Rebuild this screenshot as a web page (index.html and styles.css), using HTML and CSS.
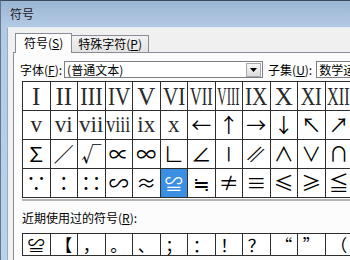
FILE: index.html
```html
<!DOCTYPE html>
<html lang="zh-CN">
<head>
    <meta charset="UTF-8">
    <title>符号</title>
    <link rel="stylesheet" href="styles.css">
</head>
<body>
    <div class="window">
        <div class="titlebar">符号</div>

        <div class="client">
            <div class="tabs">
                <div class="tab active">符号(<u>S</u>)</div>
                <div class="tab">特殊字符(<u>P</u>)</div>
            </div>

            <div class="panel">
                <div class="font-row">
                    <span class="label">字体(<u>F</u>):</span>
                    <div class="combo font-combo">
                        <span class="combo-text">(普通文本)</span>
                        <span class="drop">
                            <svg width="7" height="4" viewBox="0 0 7 4"><path d="M0 0h7L3.5 4z" fill="#000"/></svg>
                        </span>
                    </div>
                    <span class="label subset-label">子集(<u>U</u>):</span>
                    <div class="combo subset-combo">
                        <span class="combo-text">数学运算符</span>
                    </div>
                </div>

                <!-- symbol table -->
                <div class="grid-wrap">
                    <div class="grid symbols">
                        <div class="cell roman">I</div>
                        <div class="cell roman">II</div>
                        <div class="cell roman"><span class="sq x90">III</span></div>
                        <div class="cell roman"><span class="sq x85">IV</span></div>
                        <div class="cell roman">V</div>
                        <div class="cell roman"><span class="sq x85">VI</span></div>
                        <div class="cell roman"><span class="sq x65">VII</span></div>
                        <div class="cell roman"><span class="sq x50">VIII</span></div>
                        <div class="cell roman"><span class="sq x85">IX</span></div>
                        <div class="cell roman">X</div>
                        <div class="cell roman"><span class="sq x80">XI</span></div>
                        <div class="cell roman"><span class="sq x65">XII</span></div>

                        <div class="cell lower">v</div>
                        <div class="cell lower">vi</div>
                        <div class="cell lower">vii</div>
                        <div class="cell lower"><span class="sq x78">viii</span></div>
                        <div class="cell lower">ix</div>
                        <div class="cell lower">x</div>
                        <div class="cell">←</div>
                        <div class="cell">↑</div>
                        <div class="cell">→</div>
                        <div class="cell">↓</div>
                        <div class="cell">↖</div>
                        <div class="cell">↗</div>

                        <div class="cell">∑</div>
                        <div class="cell">∕</div>
                        <div class="cell">√</div>
                        <div class="cell">∝</div>
                        <div class="cell">∞</div>
                        <div class="cell">∟</div>
                        <div class="cell">∠</div>
                        <div class="cell">∣</div>
                        <div class="cell"><span class="sq slant">∥</span></div>
                        <div class="cell">∧</div>
                        <div class="cell">∨</div>
                        <div class="cell">∩</div>

                        <div class="cell">∵</div>
                        <div class="cell">∶</div>
                        <div class="cell">∷</div>
                        <div class="cell">∽</div>
                        <div class="cell">≈</div>
                        <div class="cell selected">≌</div>
                        <div class="cell">≒</div>
                        <div class="cell">≠</div>
                        <div class="cell">≡</div>
                        <div class="cell">≤</div>
                        <div class="cell">≥</div>
                        <div class="cell">≦</div>
                    </div>
                </div>

                <div class="recent-label">近期使用过的符号(<u>R</u>):</div>
                <div class="grid recent">
                    <div class="cell">≌</div>
                    <div class="cell">【</div>
                    <div class="cell">，</div>
                    <div class="cell">。</div>
                    <div class="cell">、</div>
                    <div class="cell">；</div>
                    <div class="cell">：</div>
                    <div class="cell">！</div>
                    <div class="cell">？</div>
                    <div class="cell">“</div>
                    <div class="cell">”</div>
                    <div class="cell">（</div>
                </div>
            </div>
        </div>
    </div>
</body>
</html>
```

FILE: styles.css
```css
body {
    margin: 0;
    overflow: hidden;
    font-family: 'Noto Sans CJK SC', sans-serif;
    font-size: 12px;
    color: #000;
    background-color: #b9d0ea;
}

u {
    text-decoration-thickness: 1px;
    text-underline-offset: 1px;
}

.window {
    width: 420px;
    height: 260px;
    overflow: hidden;
    border-top: 1px solid #3b4c5e;
    border-left: 1px solid #62778e;
    background: linear-gradient(#9cb5d2, #b3cae5 26px, #bcd2eb);
}

.titlebar {
    height: 26px;
    line-height: 26px;
    padding-left: 9px;
    color: #1a1a1a;
}

.client {
    margin-left: 6px;
    height: 240px;
    padding: 5px 0 0 5px;
    background-color: #f0f0f0;
    border-top: 1px solid #e2eaf3;
    border-left: 1px solid #98adc4;
}

/* tabs */
.tabs {
    display: flex;
    align-items: flex-end;
    height: 19px;
    margin-left: 2px;
    position: relative;
    z-index: 1;
}

.tab {
    height: 16px;
    line-height: 16px;
    padding: 0 6px;
    white-space: nowrap;
    border: 1px solid #898c95;
    border-bottom: none;
    background: linear-gradient(#f2f2f2, #e3e3e3);
    margin-left: -1px;
}

.tab.active {
    height: 19px;
    line-height: 18px;
    padding: 0 8px;
    margin-left: 0;
    margin-bottom: -1px;
    background: #fcfcfc;
    position: relative;
    z-index: 2;
}

.panel {
    border: 1px solid #898c95;
    background-color: #fcfcfc;
    padding: 8px 0 0 6px;
    height: 200px;
}

/* font / subset row */
.font-row {
    display: flex;
    align-items: center;
    height: 17px;
}

.label {
    white-space: nowrap;
    flex-shrink: 0;
}

.combo {
    display: flex;
    align-items: center;
    flex-shrink: 0;
    height: 15px;
    border: 1px solid #7a7e86;
    background-color: #fff;
    overflow: hidden;
}

.combo-text {
    padding-left: 2px;
    white-space: nowrap;
}

.font-combo {
    width: 197px;
    margin-left: 2px;
    justify-content: space-between;
}

.drop {
    display: flex;
    align-items: center;
    justify-content: center;
    width: 13px;
    height: 12px;
    margin-right: 1px;
    border: 1px solid #a9a9a9;
    background: linear-gradient(#f8f8f8, #dcdcdc);
}

.subset-label {
    margin-left: 5px;
}

.subset-combo {
    width: 80px;
    margin-left: 4px;
}

/* symbol tables */
.grid-wrap {
    margin: 3px 0 0 2px;
    width: max-content;
    padding-bottom: 1px;
    border-bottom: 2px solid #b4b4b4;
}

.grid {
    display: grid;
    grid-template-columns: repeat(12, 26.5px);
    grid-auto-rows: 28px;
    gap: 1px;
    width: max-content;
    background-color: #2e2e2e;
    border: 1px solid #2e2e2e;
}

.cell {
    display: flex;
    align-items: center;
    justify-content: center;
    background-color: #fff;
    font-family: 'Noto Sans CJK SC', sans-serif;
    font-size: 20px;
    line-height: 1;
    overflow: hidden;
    white-space: nowrap;
}

.cell.roman {
    font-family: 'Liberation Serif', serif;
    font-size: 25px;
    color: #2a2a2a;
}

.cell.lower {
    font-family: 'Liberation Serif', serif;
    font-size: 23px;
    color: #2a2a2a;
    padding-bottom: 2px;
}

.cell.selected {
    background-color: #3a8fe3;
    color: #fff;
    font-size: 18px;
}

.sq {
    display: inline-block;
}

.x90 { transform: scaleX(0.9); }
.x85 { transform: scaleX(0.85); }
.x80 { transform: scaleX(0.8); }
.x78 { transform: scaleX(0.78); }
.x65 { transform: scaleX(0.65); }
.x50 { transform: scaleX(0.52); }
.slant { transform: skewX(-28deg); }

.recent-label {
    margin: 9px 0 0 2px;
    line-height: 16px;
}

.grid.recent {
    margin: 7px 0 0 2px;
    grid-auto-rows: 21px;
}

.recent .cell {
    font-size: 17px;
}
```
